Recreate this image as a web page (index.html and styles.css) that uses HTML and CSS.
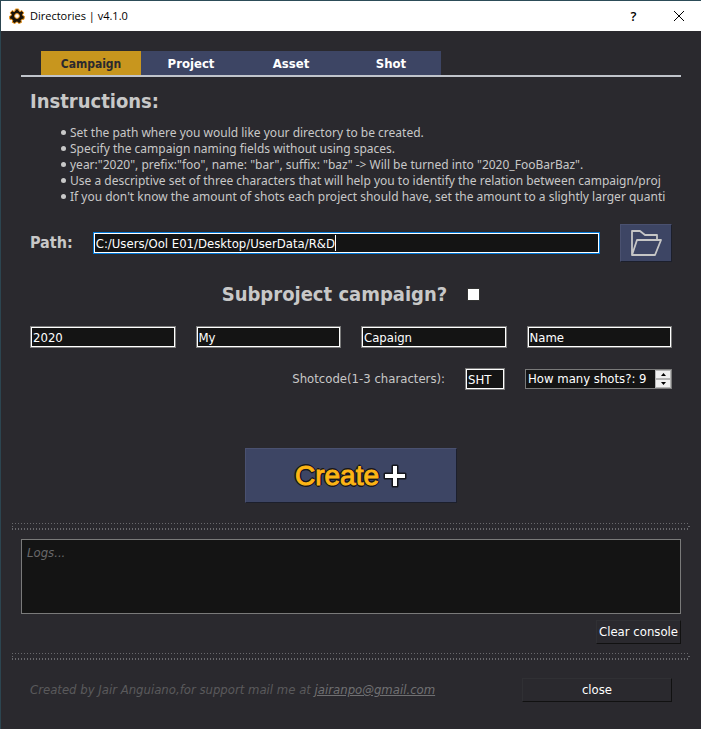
FILE: index.html
```html
<!DOCTYPE html>
<html lang="en">
<head>
<meta charset="utf-8">
<title>Directories | v4.1.0</title>
<link rel="stylesheet" href="styles.css">
</head>
<body>
<div class="window">
  <header class="titlebar">
    <svg class="app-icon" viewBox="0 0 16 16" aria-hidden="true">
      <g fill="#1c1408" stroke="#f0981c" stroke-width="1">
        <path d="M6.4 1h3.2l.4 2 1 .5 1.900-.9 1.900 2.300-1.300 1.500.3 1.200 1.700.8-.6 2.900-2 .1-.8 1 .4 2-2.700 1.200-1.300-1.500h-1.200l-1.300 1.500-2.700-1.200.4-2-.8-1-2-.1L.4 8.400l1.700-.8.3-1.200L1.200 4.900l1.900-2.300 1.900.9 1-.5z"/>
        <circle cx="8" cy="8" r="2.400" fill="#fff"/>
      </g>
    </svg>
    <h1 class="title">Directories | v4.1.0</h1>
    <button class="title-button" type="button">?</button>
    <button class="title-button" type="button" aria-label="Close window">
      <svg width="12" height="12" viewBox="0 0 12 12" aria-hidden="true"><path d="M1 1l10 10M11 1L1 11" stroke="#000" fill="none"/></svg>
    </button>
  </header>

  <main class="content">
    <nav class="tabs">
      <button class="tab tab-active" type="button">Campaign</button>
      <button class="tab" type="button">Project</button>
      <button class="tab" type="button">Asset</button>
      <button class="tab" type="button">Shot</button>
    </nav>

    <form class="panel">
      <h2 class="heading">Instructions:</h2>
      <ul class="instructions">
        <li>Set the path where you would like your directory to be created.</li>
        <li>Specify the campaign naming fields without using spaces.</li>
        <li>year:"2020", prefix:"foo", name: "bar", suffix: "baz" -&gt; Will be turned into "2020_FooBarBaz".</li>
        <li>Use a descriptive set of three characters that will help you to identify the relation between campaign/proj</li>
        <li>If you don't know the amount of shots each project should have, set the amount to a slightly larger quanti</li>
      </ul>

      <div class="path-row">
        <label class="path-label" for="path">Path:</label>
        <input class="field path-field" id="path" type="text" value="C:/Users/Ool E01/Desktop/UserData/R&amp;D">
        <button class="raised browse" type="button" aria-label="Browse">
          <svg width="32" height="28" viewBox="0 0 32 28" aria-hidden="true">
            <path d="M2 26V2h8l5 4h12v5M2 26L7 11h24l-6 15z" fill="none" stroke="#c6c6c6" stroke-width="1.800" stroke-linejoin="round"/>
          </svg>
        </button>
      </div>

      <div class="subproject-row">
        <label class="heading" for="sub">Subproject campaign?</label>
        <input class="check" id="sub" type="checkbox">
      </div>

      <div class="names">
        <input class="field" type="text" aria-label="Year" value="2020">
        <input class="field" type="text" aria-label="Prefix" value="My">
        <input class="field" type="text" aria-label="Name" value="Capaign">
        <input class="field" type="text" aria-label="Suffix" value="Name">
      </div>

      <div class="shots-row">
        <label for="code">Shotcode(1-3 characters):</label>
        <input class="field code" id="code" type="text" value="SHT">
        <div class="spin">
          <input class="spin-field" type="text" role="spinbutton" aria-label="How many shots" value="How many shots?: 9">
          <div class="steps">
            <button class="step" type="button" aria-label="More"><svg width="5" height="3" viewBox="0 0 5 3"><path d="M0 3h5L2.500 0z"/></svg></button>
            <button class="step" type="button" aria-label="Fewer"><svg width="5" height="3" viewBox="0 0 5 3"><path d="M0 0h5L2.500 3z"/></svg></button>
          </div>
        </div>
      </div>

      <button class="raised create" type="button">
        <span class="create-text">Create</span>
        <svg width="24" height="24" viewBox="0 0 24 24" aria-hidden="true"><path d="M10 2h4v8h8v4h-8v8h-4v-8H2v-4h8z" fill="#fff" stroke="#15161c" stroke-width="3" stroke-linejoin="round" paint-order="stroke"/></svg>
      </button>
    </form>
  </main>

  <hr class="divider">
  <section class="console">
    <textarea class="logs" aria-label="Logs" placeholder="Logs..."></textarea>
    <button class="flat" type="button">Clear console</button>
  </section>
  <hr class="divider">

  <footer class="footer">
    <p class="credit">Created by Jair Anguiano,for support mail me at <a href="mailto:jairanpo@gmail.com">jairanpo@gmail.com</a></p>
    <button class="flat close" type="button">close</button>
  </footer>
</div>
</body>
</html>
```
FILE: styles.css
```css
* {
  box-sizing: border-box;
}

body {
  margin: 0;
  background: #2a292e;
  color: #c8c8c8;
  font: 13px/16px "DejaVu Sans Condensed", "DejaVu Sans", sans-serif;
}

button,
input,
textarea {
  margin: 0;
  padding: 0;
  border: 0;
  border-radius: 0;
  color: #fff;
  font: inherit;
}

button {
  display: flex;
  align-items: center;
  justify-content: center;
}

.window {
  min-height: 100vh;
  border-top: 1px solid #2c4c58;
  border-left: 1px solid #2c4550;
}

.titlebar {
  display: flex;
  align-items: center;
  height: 30px;
  padding-left: 8px;
  background: #fff;
}

.app-icon {
  width: 16px;
  height: 16px;
}

.title {
  flex: 1;
  margin: 0 0 0 5px;
  color: #000;
  font: 11px/16px "Open Sans", "Noto Sans", sans-serif;
}

.title-button {
  width: 45px;
  height: 30px;
  background: none;
  color: #000;
  font: 600 13px/16px "Open Sans", "Noto Sans", sans-serif;
}

.content {
  padding: 20px 20px 0;
}

.tabs {
  display: flex;
  padding-left: 20px;
  border-bottom: 2px solid #c0c4cb;
}

.tab {
  width: 100px;
  height: 24px;
  padding-top: 2px;
  background: #3d4564;
  font-size: 13px;
  font-weight: bold;
}

.tab-active {
  background: #c8961e;
  color: #2a292e;
  font-size: 12px;
}

.panel {
  display: flex;
  flex-direction: column;
  padding: 12px 9px 0;
}

.heading {
  margin: 0;
  font-size: 20px;
  font-weight: bold;
  line-height: 24px;
}

.instructions {
  margin: 12px 0 0;
  padding-left: 40px;
  overflow: hidden;
  font-family: "Noto Sans", sans-serif;
  font-size: 12px;
  list-style: none;
  white-space: nowrap;
}

.instructions li::before {
  content: "";
  display: inline-block;
  width: 5px;
  height: 5px;
  margin: 0 4px 2px -9px;
  border-radius: 50%;
  background: #c8c8c8;
}

.path-row {
  display: flex;
  align-items: center;
  gap: 20px;
  margin-top: 19px;
}

.path-label {
  font-size: 16px;
  font-weight: bold;
}

.field {
  min-width: 0;
  height: 22px;
  padding: 0 2px;
  border: 1px solid #7a7a7a;
  outline: 1px solid #fff;
  outline-offset: -2px;
  background: #141414;
}

.path-field {
  flex: 1;
  border-color: #0078d7;
  background: linear-gradient(#fff, #fff) 241px 2px / 1px 16px no-repeat #141414;
}

.raised {
  border: 1px solid;
  border-color: #4a5170 #1c1f2c #1c1f2c #4a5170;
  background: #3d4564;
}

.browse {
  width: 52px;
  height: 38px;
}

.subproject-row {
  display: flex;
  align-items: center;
  justify-content: center;
  gap: 20px;
  margin-top: 20px;
}

.check {
  width: 13px;
  height: 13px;
  border: 1px solid #333;
  background: #fff;
  appearance: none;
}

.names {
  display: grid;
  grid-template-columns: repeat(4, 1fr);
  gap: 20px;
  margin-top: 20px;
}

.shots-row {
  display: flex;
  align-items: center;
  justify-content: flex-end;
  gap: 20px;
  margin-top: 20px;
}

.code {
  width: 40px;
}

.spin {
  display: flex;
  width: 147px;
  height: 20px;
  border: 1px solid #7a7a7a;
  background: #141414;
}

.spin-field {
  flex: 1;
  min-width: 0;
  padding-left: 2px;
  background: none;
}

.steps {
  display: flex;
  flex-direction: column;
  width: 16px;
  background: #fff;
}

.step {
  flex: 1;
  border: 1px solid #b4b4b4;
  background: #f0f0f0;
}

.create {
  align-self: center;
  gap: 4px;
  width: 212px;
  height: 55px;
  margin: 58px 0 20px;
}

.create-text {
  color: #fdb515;
  font: 28px/32px "Liberation Sans", Arial, sans-serif;
  text-shadow:
    2px 0 #15161c,
    -2px 0 #15161c,
    0 2px #15161c,
    0 -2px #15161c,
    1px 1px #15161c,
    -1px -1px #15161c,
    1px -1px #15161c,
    -1px 1px #15161c;
  -webkit-text-stroke: 1px #fdb515;
}

.divider {
  height: 7px;
  margin: 0 11px;
  border: 0;
  background:
    repeating-linear-gradient(90deg, #68686c 0 1px, transparent 1px 3px) 0 0 / 100% 1px no-repeat,
    linear-gradient(#68686c, #68686c) 0 3px / 1px 1px no-repeat,
    linear-gradient(#68686c, #68686c) 100% 3px / 2px 1px no-repeat,
    repeating-linear-gradient(90deg, #68686c 0 1px, transparent 1px 3px) 0 5px / 100% 2px no-repeat;
}

.console {
  display: flex;
  flex-direction: column;
  align-items: flex-end;
  gap: 6px;
  padding: 9px 20px;
}

.logs {
  width: 100%;
  height: 75px;
  padding: 5px;
  border: 1px solid #7a7a7a;
  background: #141414;
  resize: none;
}

.logs::placeholder {
  color: #68686a;
  font-style: italic;
}

.flat {
  height: 24px;
  padding: 0 2px;
  border: 1px solid;
  border-color: #303034 #111 #111 #303034;
  background: #2a292e;
}

.footer {
  display: flex;
  align-items: center;
  justify-content: space-between;
  padding: 18px 29px 26px;
}

.credit {
  margin: 0;
  color: #5a5a5c;
  font-style: italic;
}

.credit a {
  color: #707072;
}

.close {
  width: 150px;
}
```
